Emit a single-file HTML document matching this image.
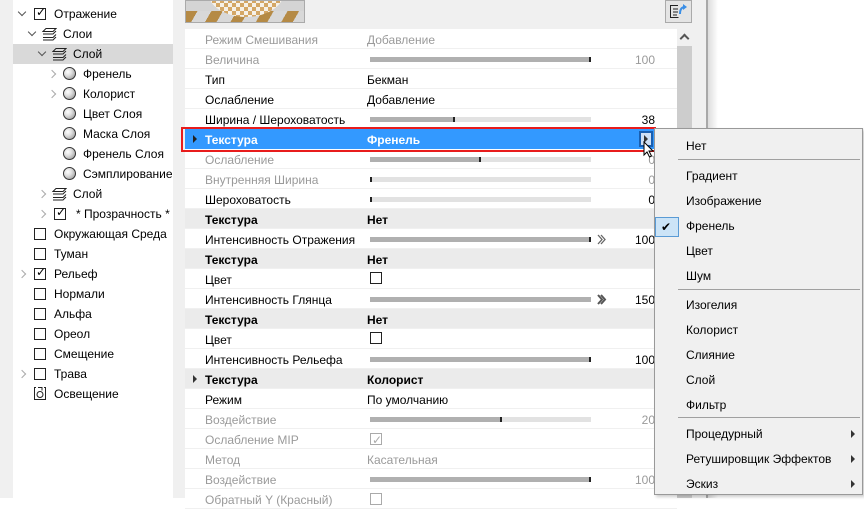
<!DOCTYPE html>
<html><head><meta charset="utf-8"><style>
*{margin:0;padding:0;box-sizing:border-box}
body{width:864px;height:498px;overflow:hidden;background:#fff;font-family:"Liberation Sans","DejaVu Sans",sans-serif;font-size:12px;color:#000;position:relative}
.a{position:absolute}
.t{position:absolute;height:20px;line-height:21px;white-space:nowrap}
.chev{position:absolute;width:6px;height:6px;border-right:1.5px solid #555;border-bottom:1.5px solid #555;transform:rotate(45deg)}
.chr{position:absolute;width:6px;height:6px;border-right:1.5px solid #aaa;border-bottom:1.5px solid #aaa;transform:rotate(-45deg)}
.cb{position:absolute;width:12px;height:12px;border:1px solid #222;background:#fff}
.sp{position:absolute;width:13px;height:13px;border-radius:50%;border:1px solid #333;background:radial-gradient(circle at 35% 35%,#fff 0,#ddd 40%,#888 100%)}
.row{position:absolute;left:185px;width:492px;height:20px;line-height:22px;border-bottom:1px solid #f0f0f0;background:#fff}
.row.g{background:#ebebeb;font-weight:bold}
.l{position:absolute;left:20px}
.v{position:absolute;left:182px}
.n{position:absolute;right:22px}
.gr{color:#9a9a9a}
.sl{position:absolute;left:185px;top:8px;width:221px;height:5px;background:#e2e2e2}
.sl i{position:absolute;left:0;top:0;height:5px;background:#b0b0b0;border-right:2px solid #222}
.mi{position:absolute;left:686px;height:20px;line-height:20px;z-index:6}
.sep{position:absolute;left:678px;width:182px;height:1px;background:#a0a0a0;z-index:6}
.ar{position:absolute;left:851px;width:0;height:0;border-left:4px solid #333;border-top:4px solid transparent;border-bottom:4px solid transparent;z-index:6}
.dc{position:absolute;left:412px;top:5px}
</style></head><body>
<div class="a" style="left:0;top:0;width:13px;height:498px;background:#f0f0f0"></div>
<div class="a" style="left:173px;top:0;width:533px;height:498px;background:#f0f0f0"></div>
<div class="a" style="left:706px;top:0;width:2px;height:498px;background:#a8a8a8"></div>
<div class="a" style="left:708px;top:0;width:10px;height:498px;background:linear-gradient(90deg,#ddd,#fff)"></div>

<!-- tree -->
<div class="a" style="left:13px;top:44px;width:160px;height:20px;background:#d9d9d9"></div>
<div class="chev" style="left:19px;top:9px"></div><div class="cb" style="left:34px;top:8px"></div><div class="a" style="left:36px;top:5px;font-size:12px;font-weight:bold">✓</div><div class="t" style="left:54px;top:4px">Отражение</div>
<div class="chev" style="left:29px;top:29px"></div>
<svg class="a" style="left:42px;top:27px" width="15" height="14" viewBox="0 0 15 14"><g fill="none" stroke="#222" stroke-width="1"><path d="M4 1.5h10l-3 3H1z"/><path d="M1 7h10l3-3"/><path d="M1 10.5h10l3-3"/><path d="M1 13h10l3-3"/></g></svg><div class="t" style="left:63px;top:24px">Слои</div>
<div class="chev" style="left:39px;top:49px"></div>
<svg class="a" style="left:52px;top:47px" width="15" height="14" viewBox="0 0 15 14"><g fill="none" stroke="#222" stroke-width="1"><path d="M4 1.5h10l-3 3H1z"/><path d="M1 7h10l3-3"/><path d="M1 10.5h10l3-3"/><path d="M1 13h10l3-3"/></g></svg><div class="t" style="left:73px;top:44px">Слой</div>
<div class="chr" style="left:49px;top:71px"></div><div class="sp" style="left:63px;top:67px"></div><div class="t" style="left:83px;top:64px">Френель</div>
<div class="chr" style="left:49px;top:91px"></div><div class="sp" style="left:63px;top:87px"></div><div class="t" style="left:83px;top:84px">Колорист</div>
<div class="sp" style="left:63px;top:107px"></div><div class="t" style="left:83px;top:104px">Цвет Слоя</div>
<div class="sp" style="left:63px;top:127px"></div><div class="t" style="left:83px;top:124px">Маска Слоя</div>
<div class="sp" style="left:63px;top:147px"></div><div class="t" style="left:83px;top:144px">Френель Слоя</div>
<div class="sp" style="left:63px;top:167px"></div><div class="t" style="left:83px;top:164px">Сэмплирование</div>
<div class="chr" style="left:39px;top:191px"></div>
<svg class="a" style="left:52px;top:187px" width="15" height="14" viewBox="0 0 15 14"><g fill="none" stroke="#222" stroke-width="1"><path d="M4 1.5h10l-3 3H1z"/><path d="M1 7h10l3-3"/><path d="M1 10.5h10l3-3"/><path d="M1 13h10l3-3"/></g></svg><div class="t" style="left:73px;top:184px">Слой</div>
<div class="chr" style="left:39px;top:211px"></div><div class="cb" style="left:54px;top:208px"></div><div class="a" style="left:56px;top:205px;font-weight:bold">✓</div><div class="t" style="left:76px;top:204px">* Прозрачность *</div>
<div class="cb" style="left:34px;top:228px"></div><div class="t" style="left:54px;top:224px">Окружающая Среда</div>
<div class="cb" style="left:34px;top:248px"></div><div class="t" style="left:54px;top:244px">Туман</div>
<div class="chr" style="left:19px;top:271px"></div><div class="cb" style="left:34px;top:268px"></div><div class="a" style="left:36px;top:265px;font-weight:bold">✓</div><div class="t" style="left:54px;top:264px">Рельеф</div>
<div class="cb" style="left:34px;top:288px"></div><div class="t" style="left:54px;top:284px">Нормали</div>
<div class="cb" style="left:34px;top:308px"></div><div class="t" style="left:54px;top:304px">Альфа</div>
<div class="cb" style="left:34px;top:328px"></div><div class="t" style="left:54px;top:324px">Ореол</div>
<div class="cb" style="left:34px;top:348px"></div><div class="t" style="left:54px;top:344px">Смещение</div>
<div class="chr" style="left:19px;top:371px"></div><div class="cb" style="left:34px;top:368px"></div><div class="t" style="left:54px;top:364px">Трава</div>
<svg class="a" style="left:33px;top:386px" width="14" height="15" viewBox="0 0 14 15"><g fill="none" stroke="#222"><path d="M3 1.5H1.5v12h11v-12H11"/><path d="M5 1.5h4v3"/><circle cx="7" cy="8.5" r="3"/></g></svg><div class="t" style="left:54px;top:384px">Освещение</div>

<!-- preview -->
<div class="a" style="left:185px;top:0;width:120px;height:23px;background:#d4d4d4;border:1px solid #aaa;overflow:hidden">
<div class="a" style="left:0;top:10px;width:120px;height:12px;background:repeating-linear-gradient(120deg,#b58a45 0 10px,#d8d8d8 10px 22px)"></div>
<div class="a" style="left:22px;top:-34px;width:76px;height:50px;border-radius:50%;background:repeating-conic-gradient(#d4a766 0 25%,#f6f1e8 0 50%) 0 0/8px 8px"></div>
</div>
<div class="a" style="left:665px;top:0;width:27px;height:23px;background:#e4e4e4;border:1px solid #aaa"></div>
<svg class="a" style="left:669px;top:2px" width="20" height="18" viewBox="0 0 20 18"><g fill="none" stroke="#222"><path d="M9 3.5H1.5v12h8"/><path d="M4 7h5M4 10h5M4 13h4"/></g><path d="M11 12c0-5 2-7 5-7" stroke="#3a8ee6" stroke-width="2" fill="none"/><path d="M14 2l4 3-4 3z" fill="#3a8ee6"/></svg>

<!-- scrollbar -->
<div class="a" style="left:677px;top:29px;width:15px;height:469px;background:#f0f0f0"></div>
<div class="a" style="left:677px;top:46px;width:15px;height:452px;background:#cdcdcd"></div>
<div class="a" style="left:681px;top:35px;width:7px;height:7px;border-left:2px solid #555;border-top:2px solid #555;transform:rotate(45deg)"></div>

<!-- rows -->
<div class="row gr" style="top:29px"><span class="l">Режим Смешивания</span><span class="v">Добавление</span></div>
<div class="row gr" style="top:49px"><span class="l">Величина</span><div class="sl"><i style="width:221px"></i></div><span class="n">100</span></div>
<div class="row" style="top:69px"><span class="l">Тип</span><span class="v">Бекман</span></div>
<div class="row" style="top:89px"><span class="l">Ослабление</span><span class="v">Добавление</span></div>
<div class="row" style="top:109px"><span class="l">Ширина / Шероховатость</span><div class="sl"><i style="width:85px"></i></div><span class="n">38</span></div>
<div class="row gr" style="top:149px"><span class="l">Ослабление</span><div class="sl"><i style="width:111px"></i></div><span class="n">0</span></div>
<div class="row gr" style="top:169px"><span class="l">Внутренняя Ширина</span><div class="sl"><i style="width:2px"></i></div><span class="n">0</span></div>
<div class="row" style="top:189px"><span class="l">Шероховатость</span><div class="sl"><i style="width:2px"></i></div><span class="n">0</span></div>
<div class="row g" style="top:209px"><span class="l">Текстура</span><span class="v">Нет</span></div>
<div class="row" style="top:229px"><span class="l">Интенсивность Отражения</span><div class="sl"><i style="width:221px"></i></div><svg class="dc" width="10" height="11" viewBox="0 0 10 11"><path d="M1 1l4 4.5-4 4.5M4 1l4 4.5-4 4.5" fill="none" stroke="#666" stroke-width="1.3"/></svg><span class="n">100</span></div>
<div class="row g" style="top:249px"><span class="l">Текстура</span><span class="v">Нет</span></div>
<div class="row" style="top:269px"><span class="l">Цвет</span><div class="cb" style="left:185px;top:3px"></div></div>
<div class="row" style="top:289px"><span class="l">Интенсивность Глянца</span><div class="sl"><i style="width:221px;border:none"></i></div><svg class="dc" width="10" height="11" viewBox="0 0 10 11"><path d="M1 1l4 4.5-4 4.5M4 1l4 4.5-4 4.5" fill="none" stroke="#555" stroke-width="2"/></svg><span class="n">150</span></div>
<div class="row g" style="top:309px"><span class="l">Текстура</span><span class="v">Нет</span></div>
<div class="row" style="top:329px"><span class="l">Цвет</span><div class="cb" style="left:185px;top:3px"></div></div>
<div class="row" style="top:349px"><span class="l">Интенсивность Рельефа</span><div class="sl"><i style="width:221px"></i></div><span class="n">100</span></div>
<div class="row g" style="top:369px"><span class="l">Текстура</span><span class="v">Колорист</span></div>
<div class="a" style="left:193px;top:375px;border-left:4px solid #333;border-top:4px solid transparent;border-bottom:4px solid transparent"></div>
<div class="row" style="top:389px"><span class="l">Режим</span><span class="v">По умолчанию</span></div>
<div class="row gr" style="top:409px"><span class="l">Воздействие</span><div class="sl"><i style="width:132px"></i></div><span class="n">20</span></div>
<div class="row gr" style="top:429px"><span class="l">Ослабление MIP</span><div class="cb" style="left:185px;top:4px;border-color:#aaa"></div><span class="a" style="left:187px;top:0;color:#aaa">✓</span></div>
<div class="row gr" style="top:449px"><span class="l">Метод</span><span class="v">Касательная</span></div>
<div class="row gr" style="top:469px"><span class="l">Воздействие</span><div class="sl"><i style="width:221px"></i></div><span class="n">100</span></div>
<div class="row gr" style="top:489px"><span class="l">Обратный Y (Красный)</span><div class="cb" style="left:185px;top:4px;border-color:#aaa"></div></div>

<!-- selected row -->
<div class="row" style="top:129px;background:#3399ff;color:#fff;font-weight:bold;border:none;z-index:3"><span class="l">Текстура</span><span class="v">Френель</span></div>
<div class="a" style="left:193px;top:135px;border-left:4px solid #222;border-top:4px solid transparent;border-bottom:4px solid transparent;z-index:4"></div>
<div class="a" style="left:181px;top:127px;width:475px;height:25px;border:2px solid #e81c1c;z-index:4"></div>
<div class="a" style="left:639px;top:131px;width:14px;height:16px;border:2px solid #1a5fb0;background:#cfe0f5;z-index:4"></div>
<div class="a" style="left:644px;top:135px;border-left:4px solid #333;border-top:4px solid transparent;border-bottom:4px solid transparent;z-index:4"></div>
<svg class="a" style="left:643px;top:141px;z-index:7" width="12" height="18" viewBox="0 0 12 18"><path d="M1 1v13l3-3 2.5 5 2-1-2.5-5H10z" fill="#fff" stroke="#000"/></svg>

<!-- menu -->
<div class="a" style="left:654px;top:128px;width:209px;height:367px;background:#f0f0f0;border:1px solid #999;box-shadow:2px 2px 3px rgba(0,0,0,.2);z-index:5"></div>
<div class="mi" style="top:136px">Нет</div>
<div class="sep" style="top:159px"></div>
<div class="mi" style="top:166px">Градиент</div>
<div class="mi" style="top:191px">Изображение</div>
<div class="a" style="left:655px;top:217px;width:24px;height:20px;background:#cce4f7;border:1px solid #5a9bd5;z-index:6"></div>
<div class="a" style="left:661px;top:217px;font-size:12px;line-height:20px;z-index:6">✔</div>
<div class="mi" style="top:216px">Френель</div>
<div class="mi" style="top:241px">Цвет</div>
<div class="mi" style="top:266px">Шум</div>
<div class="sep" style="top:289px"></div>
<div class="mi" style="top:295px">Изогелия</div>
<div class="mi" style="top:320px">Колорист</div>
<div class="mi" style="top:345px">Слияние</div>
<div class="mi" style="top:370px">Слой</div>
<div class="mi" style="top:395px">Фильтр</div>
<div class="sep" style="top:417px"></div>
<div class="mi" style="top:424px">Процедурный</div><div class="ar" style="top:430px"></div>
<div class="mi" style="top:449px">Ретушировщик Эффектов</div><div class="ar" style="top:455px"></div>
<div class="mi" style="top:474px">Эскиз</div><div class="ar" style="top:480px"></div>
</body></html>
